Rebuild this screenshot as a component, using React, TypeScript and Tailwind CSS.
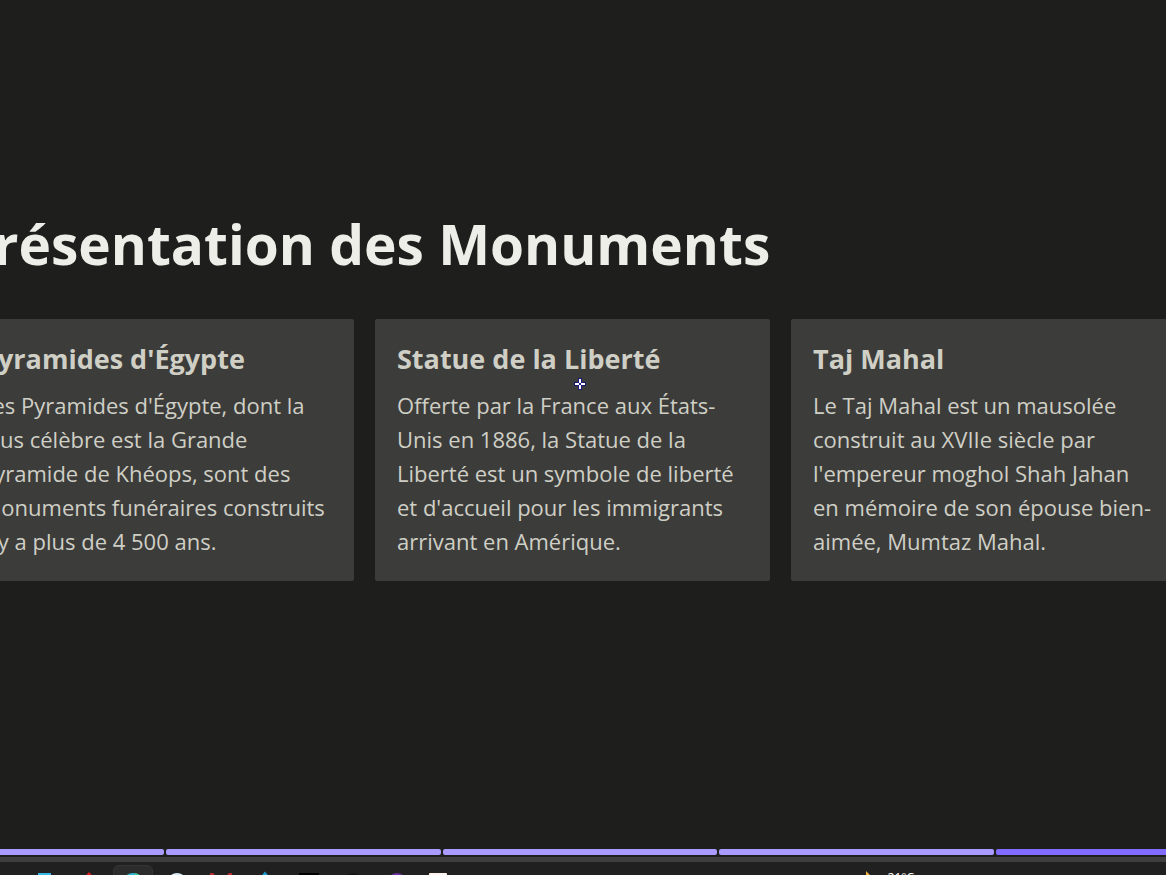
import type { ReactNode } from 'react';

type Monument = { title: string; lines: string[] };

const monuments: Monument[] = [
  {
    title: "Pyramides d'Égypte",
    lines: [
      "Les Pyramides d'Égypte, dont la",
      'plus célèbre est la Grande',
      'Pyramide de Khéops, sont des',
      'monuments funéraires construits',
      'il y a plus de 4 500 ans.',
    ],
  },
  {
    title: 'Statue de la Liberté',
    lines: [
      'Offerte par la France aux États-',
      'Unis en 1886, la Statue de la',
      'Liberté est un symbole de liberté',
      "et d'accueil pour les immigrants",
      'arrivant en Amérique.',
    ],
  },
  {
    title: 'Taj Mahal',
    lines: [
      'Le Taj Mahal est un mausolée',
      'construit au XVIIe siècle par',
      "l'empereur moghol Shah Jahan",
      'en mémoire de son épouse bien-',
      'aimée, Mumtaz Mahal.',
    ],
  },
];

function Card({ title, lines }: Monument) {
  return (
    <article className="rounded-xs bg-[#3c3c3a] px-[22px] pt-[22px] pb-[23px] text-[#cfcfc6]">
      <h2 className="mb-3 text-[27px] leading-[35px] font-bold whitespace-nowrap">{title}</h2>
      <p className="text-[22px] leading-[34px] whitespace-nowrap">
        {lines.map((line) => (
          <span key={line} className="block">
            {line}{' '}
          </span>
        ))}
      </p>
    </article>
  );
}

function TaskIcon({ children, active = false }: { children: ReactNode; active?: boolean }) {
  return (
    <div className="flex w-11 justify-center">
      <div
        className={
          active
            ? 'flex h-10 w-10 justify-center rounded-md border border-[#353535] bg-[#2c2c2c] pt-1.5'
            : 'flex h-10 w-10 justify-center pt-1.5'
        }
      >
        <svg width="24" height="24" viewBox="0 0 24 24" aria-hidden="true">
          {children}
        </svg>
      </div>
    </div>
  );
}

export default function App() {
  return (
    <div className="flex h-screen flex-col overflow-hidden bg-[#1e1e1c] font-['Open_Sans',sans-serif]">
      <main className="-mr-5 -ml-[41px] flex-1 pt-52">
        <h1 className="mb-[39px] text-[55px] leading-[72px] font-bold whitespace-nowrap text-[#edeee8]">
          Présentation des Monuments
        </h1>
        <div className="relative grid grid-cols-3 gap-[21px]">
          {monuments.map((m) => (
            <Card key={m.title} {...m} />
          ))}
          <svg
            className="absolute top-[59px] left-[615px]"
            width="12"
            height="12"
            viewBox="0 0 12 12"
            shapeRendering="crispEdges"
            aria-hidden="true"
          >
            <path d="M4 0h4v4h4v4H8v4H4V8H0V4h4z" fill="#18187c" />
            <path d="M5 1h2v4H5zM5 7h2v4H5zM1 5h4v2H1zM7 5h4v2H7z" fill="#fff" />
          </svg>
        </div>
      </main>
      <div className="-mr-[105px] -ml-[111px] mb-0.5 grid h-1.5 grid-cols-5 gap-0.5">
        <div className="rounded-xs bg-[#a99bff]" />
        <div className="rounded-xs bg-[#a99bff]" />
        <div className="rounded-xs bg-[#a99bff]" />
        <div className="rounded-xs bg-[#a99bff]" />
        <div className="rounded-xs bg-[#816cff]" />
      </div>
      <div className="h-[5px] bg-[#3e3e3e]" />
      <footer className="flex h-[13px] items-start justify-between overflow-hidden bg-[#202020]">
        <div className="ml-[23px] flex pt-[3px]">
          <TaskIcon>
            <path d="M5 2h13v3h4v16H2V5h3z" fill="#35b8e8" />
          </TaskIcon>
          <TaskIcon>
            <path d="M12 1l9 10-9 10-9-10z" fill="#d81e1e" />
          </TaskIcon>
          <TaskIcon active>
            <circle cx="12" cy="12" r="11" fill="#29b8d2" />
            <path d="M14 1a11 11 0 0 1 9 11h-9z" fill="#3ccb8b" />
          </TaskIcon>
          <TaskIcon>
            <circle cx="12" cy="12" r="10" fill="#d9edf6" />
          </TaskIcon>
          <TaskIcon>
            <path d="M1 2h3l8 8 8-8h3v20H1z" fill="#b52b31" />
          </TaskIcon>
          <TaskIcon>
            <path d="M12 2l8 10-8 10-8-10z" fill="#1d9bd0" stroke="#1d9bd0" strokeWidth="2" />
          </TaskIcon>
          <TaskIcon>
            <path d="M2 2h20v20H2z" fill="#000" />
          </TaskIcon>
          <TaskIcon>
            <circle cx="12" cy="12" r="10" fill="#191614" />
          </TaskIcon>
          <TaskIcon>
            <circle cx="12" cy="12" r="10" fill="#68309c" />
          </TaskIcon>
          <TaskIcon>
            <rect x="0" y="2" width="18" height="20" rx="1" fill="#fff3ee" />
          </TaskIcon>
        </div>
        <div className="mr-[252px] flex gap-4 pt-2">
          <svg width="8" height="24" viewBox="0 0 8 24" aria-hidden="true">
            <path d="M2 1l6 6v12H2z" fill="#f0b43c" />
          </svg>
          <span className="text-xs leading-4 text-white">21°C</span>
        </div>
      </footer>
    </div>
  );
}
